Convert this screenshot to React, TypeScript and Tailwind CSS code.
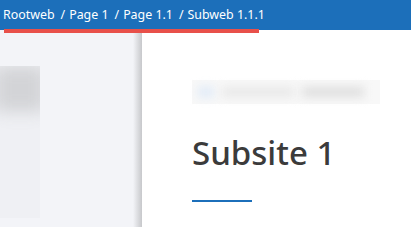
export default function App() {
  const crumbs = ["Rootweb", "Page 1", "Page 1.1", "Subweb 1.1.1"];
  return (
    <div className="relative w-[411px] h-[227px] overflow-hidden bg-white font-['Noto_Sans',sans-serif]">
      <div className="flex h-[30px] items-center bg-[#1c6fba] pl-[3px] text-[12.4px] text-white">
        {crumbs.map((c, i) => (
          <span key={c} className="flex items-center">
            {i > 0 && <span className="ml-[6px] mr-[4px]">/</span>}
            <span>{c}</span>
          </span>
        ))}
      </div>
      {/* highlight under the breadcrumb */}
      <div className="absolute left-[4px] top-[29px] h-[4px] w-[255px] bg-[#e8504a]" />

      <div className="flex h-[197px]">
        <div className="flex w-[142px] bg-[#f3f4f8]">
          <div className="flex-1 pt-[36px]">
            <div className="relative h-[152px] w-[40px] overflow-hidden bg-[#eff0f4]">
              <div className="-ml-[6px] h-[46px] w-[52px] bg-[#d3d4d7] blur-[8px]" />
            </div>
          </div>
          <div className="w-[9px] bg-gradient-to-r from-[#f3f4f8] to-[#c7c8cb]" />
        </div>

        <div className="flex-1 pl-[50px]">
          <div className="mt-[50px] flex h-[24px] w-[188px] items-center gap-[8px] bg-[#f8f8f8] px-[6px]">
            <div className="h-[12px] w-[16px] bg-[#e3ecf7] blur-[4px]" />
            <div className="h-[10px] w-[72px] bg-[#e8e8e8] blur-[5px]" />
            <div className="h-[10px] w-[62px] bg-[#dedede] blur-[5px]" />
          </div>
          <h1 className="mt-[27px] text-[33px] font-medium leading-[44px] text-[#3b3b3b]">Subsite 1</h1>
          <div className="mt-[25px] h-[2px] w-[60px] bg-[#1c6fba]" />
        </div>
      </div>
    </div>
  );
}
